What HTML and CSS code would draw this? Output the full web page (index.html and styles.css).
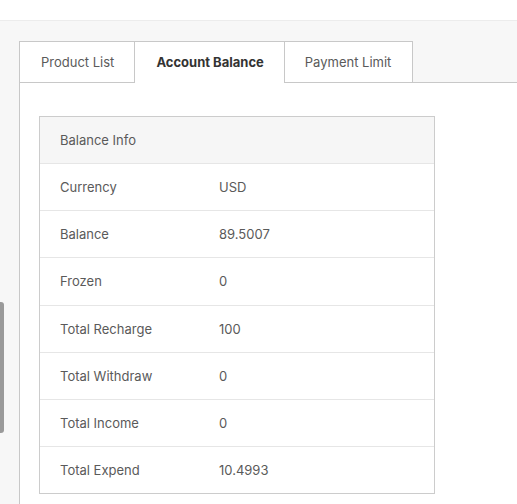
FILE: index.html
```html
<!DOCTYPE html>
<html lang="en">
<head>
<meta charset="utf-8">
<title>Account Balance</title>
<link rel="stylesheet" href="styles.css">
</head>
<body>
<div class="topbar"></div>
<main class="main">
  <div class="tabs">
    <div class="tab first">Product List</div>
    <div class="tab active">Account Balance</div>
    <div class="tab last">Payment Limit</div>
  </div>
  <section class="panel">
    <div class="card">
      <div class="card-head">Balance Info</div>
      <div class="row"><span class="label">Currency</span><span class="value">USD</span></div>
      <div class="row"><span class="label">Balance</span><span class="value">89.5007</span></div>
      <div class="row"><span class="label">Frozen</span><span class="value">0</span></div>
      <div class="row"><span class="label">Total Recharge</span><span class="value">100</span></div>
      <div class="row"><span class="label">Total Withdraw</span><span class="value">0</span></div>
      <div class="row"><span class="label">Total Income</span><span class="value">0</span></div>
      <div class="row"><span class="label">Total Expend</span><span class="value">10.4993</span></div>
    </div>
  </section>
</main>
<div class="scrollthumb"></div>
</body>
</html>
```

FILE: styles.css
```css
* { box-sizing: border-box; }
html, body { margin: 0; height: 100%; }
body {
  font-family: Inter, "Noto Sans", "Liberation Sans", sans-serif;
  font-size: 13px;
  color: #5a5a5a;
  background: #f7f7f7;
  overflow: hidden;
  position: relative;
  display: flex;
  flex-direction: column;
}
.topbar {
  height: 21px;
  flex: none;
  background: #fff;
  border-bottom: 1px solid #ececec;
}
.main {
  flex: 1;
  display: flex;
  flex-direction: column;
  padding: 20px 0 0 19px;
  min-height: 0;
}
.tabs {
  display: flex;
  height: 41px;
  flex: none;
}
.tab {
  display: flex;
  align-items: center;
  justify-content: center;
  padding: 0 20px 1px 20px;
  height: 41px;
  border-top: 1px solid #c8c8c8;
  border-left: 1px solid #c8c8c8;
  background: #fff;
  color: #5a5a5a;
}
.tab.first { padding: 0 20px 1px 21px; }
.tab.last { border-right: 1px solid #c8c8c8; padding: 0 21px 1px 20px; }
.tab.active {
  height: 42px;
  font-weight: 700;
  color: #333;
  position: relative;
  z-index: 1;
  padding: 0 20px 2px 21px;
}
.panel {
  flex: 1;
  background: #fff;
  border-top: 1px solid #c8c8c8;
  border-left: 1px solid #c8c8c8;
  padding: 33px 0 0 19px;
  min-height: 0;
}
.card {
  width: 396px;
  border: 1px solid #cccccc;
}
.card-head {
  height: 47px;
  display: flex;
  align-items: center;
  padding-left: 20px;
  background: #f6f6f6;
  border-bottom: 1px solid #e6e6e6;
}
.row {
  height: 47.2px;
  display: grid;
  grid-template-columns: 159px 1fr;
  align-items: center;
  border-bottom: 1px solid #e6e6e6;
}
.row:last-child { border-bottom: none; height: 46.2px; }
.label, .value { padding-left: 20px; }
.scrollthumb {
  position: absolute;
  left: 0;
  top: 302px;
  width: 4px;
  height: 131px;
  background: #9a9a9a;
  border-radius: 0 3px 3px 0;
}
```
